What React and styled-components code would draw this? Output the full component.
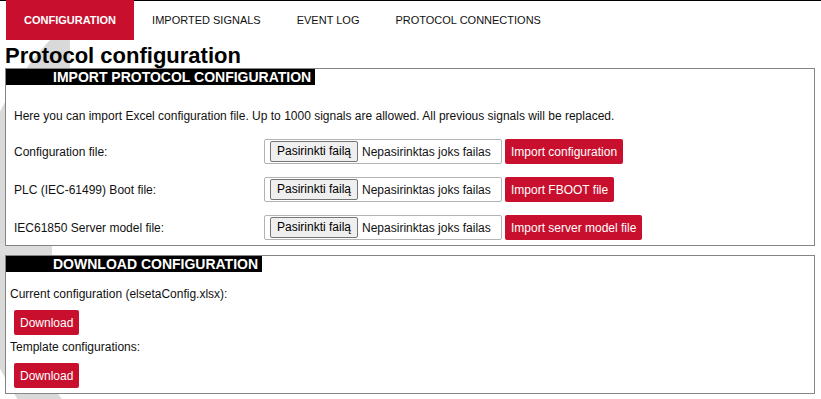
import React from 'react';
import styled, { createGlobalStyle } from 'styled-components';

const RED = '#c8102e';

const GlobalStyle = createGlobalStyle`
    body {
        margin: 0;
        background: #fff;
        font-family: "Liberation Sans", Arial, sans-serif;
        color: #111;
    }
`;

const Page = styled.div`
    position: relative;
    width: 821px;
    min-height: 399px;
    overflow: hidden;
`;

const Watermark = styled.svg`
    position: absolute;
    left: 0;
    top: 0;
    z-index: 0;
    pointer-events: none;
`;

const TabBar = styled.nav`
    position: relative;
    z-index: 1;
    display: flex;
    height: 39px;
    padding-left: 6px;
    border-top: 1px solid #000;
`;

const Tab = styled.a`
    display: flex;
    align-items: center;
    height: 40px;
    margin-top: -1px;
    padding: 0 18px;
    font-size: 11px;
    font-weight: ${(p) => (p.$active ? 'bold' : 'normal')};
    color: ${(p) => (p.$active ? '#fff' : '#111')};
    background: ${(p) => (p.$active ? RED : 'transparent')};
    text-decoration: none;
    cursor: pointer;
`;

const Content = styled.main`
    position: relative;
    z-index: 1;
    padding: 0 6px 0 5px;
`;

const Title = styled.h1`
    margin: 3px 0 0;
    font-size: 22px;
    line-height: 25px;
    font-weight: bold;
    color: #000;
`;

const Section = styled.section`
    border: 1px solid #858585;
    background: #fff;
    margin-bottom: 9px;
    padding-bottom: ${(p) => p.$bottom}px;
`;

const SectionHead = styled.div`
    width: fit-content;
    padding: 0 4px 0 47px;
    background: #000;
    color: #fff;
    font-size: 14px;
    font-weight: bold;
    line-height: 16px;
`;

const Description = styled.p`
    margin: 24px 0 16px;
    padding-left: 8px;
    font-size: 12px;
    line-height: 14px;
`;

const Rows = styled.div`
    display: flex;
    flex-direction: column;
    gap: 13px;
    padding-left: 8px;
`;

const Row = styled.div`
    display: flex;
    align-items: center;
    height: 25px;
`;

const Label = styled.span`
    width: 250px;
    font-size: 12px;
`;

const FileBox = styled.label`
    box-sizing: border-box;
    display: flex;
    align-items: center;
    width: 238px;
    height: 25px;
    padding: 0 5px;
    border: 1px solid #b3b3b3;
    border-radius: 2px;
    background: #fff;
    font-size: 12px;
    color: #111;
`;

const PickButton = styled.span`
    box-sizing: border-box;
    height: 21px;
    line-height: 19px;
    padding: 0 6px;
    border: 1px solid #767676;
    border-radius: 2px;
    background: #efefef;
    color: #000;
    white-space: nowrap;
`;

const FileName = styled.span`
    margin-left: 4px;
    white-space: nowrap;
`;

const RedButton = styled.button`
    height: 25px;
    margin-left: ${(p) => p.$ml || 0}px;
    padding: 0 6px;
    border: none;
    border-radius: 2px;
    background: ${RED};
    color: #fff;
    font-family: inherit;
    font-size: 12px;
    cursor: pointer;
`;

const DownloadBody = styled.div`
    display: flex;
    flex-direction: column;
    align-items: flex-start;
    padding: 15px 0 0 4px;
`;

const DownloadLabel = styled.div`
    font-size: 12px;
    line-height: 14px;
`;

const DownloadSlot = styled.div`
    margin: 9px 0 5px 4px;
`;

const importRows = [
    { label: 'Configuration file:', action: 'Import configuration' },
    { label: 'PLC (IEC-61499) Boot file:', action: 'Import FBOOT file' },
    { label: 'IEC61850 Server model file:', action: 'Import server model file' },
];

export default function App() {
    return (
        <Page>
            <GlobalStyle />
            <Watermark width="70" height="399" viewBox="0 0 70 399">
                <circle cx="260" cy="240" r="272" fill="none" stroke="#d9d9d9" strokeWidth="36" />
                <rect x="0" y="243" width="52" height="13" fill="#dcdcdc" />
            </Watermark>

            <TabBar>
                <Tab $active>CONFIGURATION</Tab>
                <Tab>IMPORTED SIGNALS</Tab>
                <Tab>EVENT LOG</Tab>
                <Tab>PROTOCOL CONNECTIONS</Tab>
            </TabBar>

            <Content>
                <Title>Protocol configuration</Title>

                <Section $bottom={5}>
                    <SectionHead>IMPORT PROTOCOL CONFIGURATION</SectionHead>
                    <Description>
                        Here you can import Excel configuration file. Up to 1000 signals are allowed. All previous signals will be replaced.
                    </Description>
                    <Rows>
                        {importRows.map((r) => (
                            <Row key={r.label}>
                                <Label>{r.label}</Label>
                                <FileBox>
                                    <PickButton>Pasirinkti failą</PickButton>
                                    <FileName>Nepasirinktas joks failas</FileName>
                                </FileBox>
                                <RedButton $ml={3}>{r.action}</RedButton>
                            </Row>
                        ))}
                    </Rows>
                </Section>

                <Section $bottom={0}>
                    <SectionHead>DOWNLOAD CONFIGURATION</SectionHead>
                    <DownloadBody>
                        <DownloadLabel>Current configuration (elsetaConfig.xlsx):</DownloadLabel>
                        <DownloadSlot>
                            <RedButton>Download</RedButton>
                        </DownloadSlot>
                        <DownloadLabel>Template configurations:</DownloadLabel>
                        <DownloadSlot>
                            <RedButton>Download</RedButton>
                        </DownloadSlot>
                    </DownloadBody>
                </Section>
            </Content>
        </Page>
    );
}
